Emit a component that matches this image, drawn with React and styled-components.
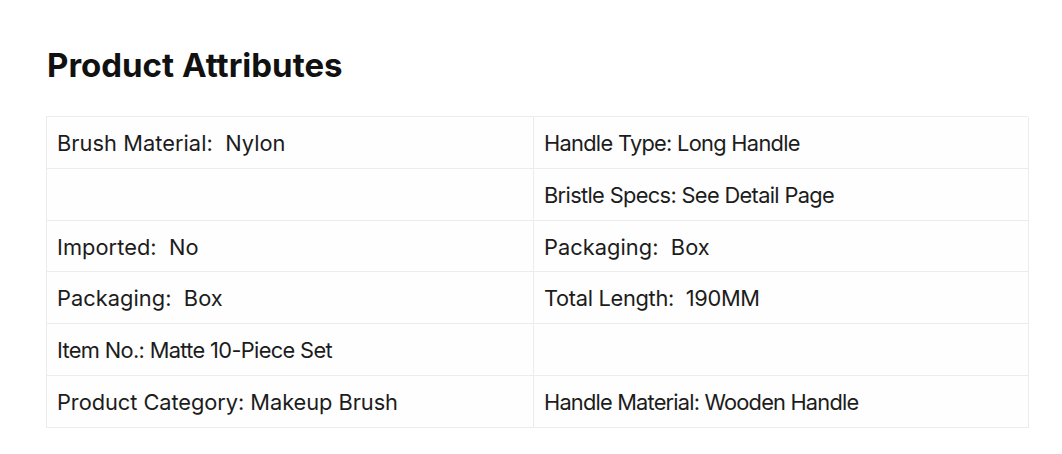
import React from "react";
import styled, { createGlobalStyle } from "styled-components";

const Global = createGlobalStyle`
  html, body { margin: 0; padding: 0; background: #ffffff; }
  body { font-family: Inter, Roboto, "Liberation Sans", sans-serif; color: #1a1a1a; }
`;

const Page = styled.div`
  padding: 45px 34px 0 46px;
  width: 1062px;
  box-sizing: border-box;
`;

const Title = styled.h2`
  margin: 0 0 31px 1px;
  font-size: 33px;
  line-height: 40px;
  font-weight: 700;
  color: #111;
  letter-spacing: 0px;
`;

const Table = styled.div`
  display: grid;
  grid-template-columns: 487px 495px;
  grid-auto-rows: 51.83px;
  border-top: 1px solid #ececec;
  border-left: 1px solid #ececec;
`;

const Cell = styled.div`
  box-sizing: border-box;
  border-right: 1px solid #ececec;
  border-bottom: 1px solid #ececec;
  padding: 1px 10px 0;
  display: flex;
  align-items: center;
  font-size: 21.8px;
  letter-spacing: ${(p) => p.$track ?? 0.05}px;
  color: #1c1c1c;
  background: #fefefe;
  white-space: pre;
`;

const rows = [
  [["Brush Material:  Nylon"], ["Handle Type: Long Handle", -0.7]],
  [[""], ["Bristle Specs: See Detail Page", -0.65]],
  [["Imported:  No"], ["Packaging:  Box"]],
  [["Packaging:  Box"], ["Total Length:  190MM", -0.3]],
  [["Item No.: Matte 10-Piece Set", -0.65], [""]],
  [["Product Category: Makeup Brush", -0.05], ["Handle Material: Wooden Handle", -0.8]],
];

export default function App() {
  return (
    <Page>
      <Global />
      <Title>Product Attributes</Title>
      <Table>
        {rows.flatMap((r, i) =>
          r.map(([t, track], j) => (
            <Cell key={`${i}-${j}`} $track={track}>
              {t}
            </Cell>
          ))
        )}
      </Table>
    </Page>
  );
}
